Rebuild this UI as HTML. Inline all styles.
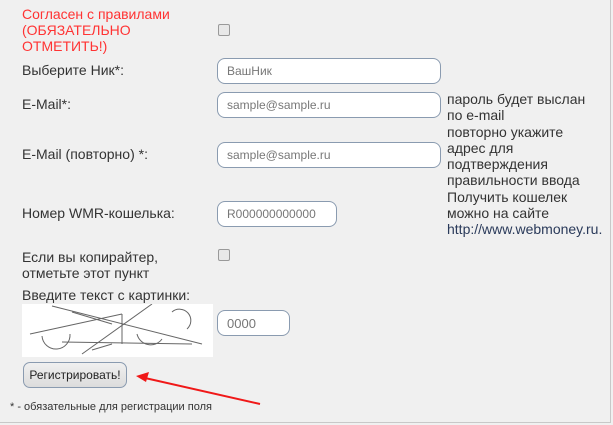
<!DOCTYPE html>
<html><head><meta charset="utf-8"><style>
body{margin:0;width:613px;height:425px;background:#f0f0f0;font-family:"Liberation Sans",Arial,sans-serif;position:relative;overflow:hidden;color:#333}
.frame{position:absolute;left:0;top:0;width:610px;height:422px;border-right:1px solid #c8c8c8;border-bottom:1px solid #c8c8c8}
.t{position:absolute;font-size:14px;line-height:16px;white-space:nowrap}
.in{position:absolute;background:#fff;border:1px solid #8a9bb0;border-radius:8px;box-sizing:border-box;font-size:12px;color:#777;padding-left:9px;display:flex;align-items:center}
.cb{position:absolute;width:10px;height:10px;border:1px solid #999;border-radius:2px;background:#e8e8e8}
</style></head><body>
<div class="frame"></div>
<div class="t" style="left:22px;top:6px;color:#ff3333">Согласен с правилами<br>(ОБЯЗАТЕЛЬНО<br>ОТМЕТИТЬ!)</div>
<div class="cb" style="left:218px;top:24px"></div>
<div class="t" style="left:22px;top:62px">Выберите Ник*:</div>
<div class="in" style="left:217px;top:58px;width:224px;height:26px">ВашНик</div>
<div class="t" style="left:22px;top:96px">E-Mail*:</div>
<div class="in" style="left:217px;top:92px;width:224px;height:26px">sample@sample.ru</div>
<div class="t" style="left:447px;top:91px">пароль будет выслан<br>по e-mail</div>
<div class="t" style="left:22px;top:146px">E-Mail (повторно) *:</div>
<div class="in" style="left:217px;top:142px;width:224px;height:26px">sample@sample.ru</div>
<div class="t" style="left:447px;top:124px">повторно укажите<br>адрес для<br>подтверждения<br>правильности ввода</div>
<div class="t" style="left:22px;top:205px">Номер WMR-кошелька:</div>
<div class="in" style="left:217px;top:201px;width:120px;height:26px">R000000000000</div>
<div class="t" style="left:447px;top:189px">Получить кошелек<br>можно на сайте<br><span style="color:#2a3a5a">http://www.webmoney.ru.</span></div>
<div class="t" style="left:22px;top:249px">Если вы копирайтер,<br>отметьте этот пункт</div>
<div class="cb" style="left:218px;top:249px"></div>
<div class="t" style="left:22px;top:287px">Введите текст с картинки:</div>
<svg style="position:absolute;left:22px;top:304px" width="191" height="53">
<rect width="191" height="53" fill="#fff"/>
<g fill="none" stroke="#666" stroke-width="1">
<path d="M8 30 L100 10"/><path d="M30 2 L180 40"/><path d="M100 10 V40"/><path d="M40 38 L170 40"/>
<path d="M60 50 L130 0"/><path d="M50 8 L90 20"/>
<path d="M20 32 A14 14 0 0 0 48 30"/><path d="M115 30 A14 14 0 0 0 140 35"/>
<path d="M150 8 A10 10 0 0 1 165 25"/><path d="M70 46 L90 40"/>
</g></svg>
<div class="in" style="left:217px;top:310px;width:73px;height:26px;font-size:13px">0000</div>
<div style="position:absolute;left:23px;top:362px;width:104px;height:26px;box-sizing:border-box;border:1px solid #8a9bb0;border-radius:7px;background:linear-gradient(#f0f0f0,#dcdcdc);font-size:12px;color:#222;text-align:center;line-height:24px">Регистрировать!</div>
<svg style="position:absolute;left:0;top:0" width="613" height="425">
<path d="M260 404 L145 378" stroke="#f01818" stroke-width="2"/>
<path d="M136 376 L149 372 L146 382 Z" fill="#f01818"/>
</svg>
<div class="t" style="left:10px;top:401px;font-size:11px;line-height:13px">* - обязательные для регистрации поля</div>
</body></html>
